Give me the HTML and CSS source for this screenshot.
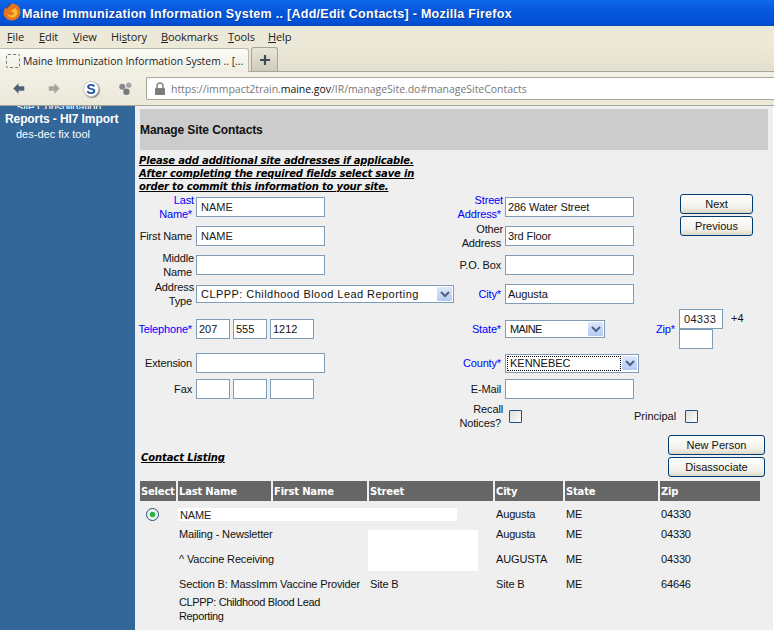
FILE: index.html
```html
<!DOCTYPE html>
<html lang="en">
<head>
<meta charset="utf-8">
<title>Maine Immunization Information System</title>
<link rel="stylesheet" href="styles.css">
</head>
<body>
<div class="window">
  <header class="titlebar">
    <svg class="ff-logo" viewBox="0 0 20 20" width="20" height="20" aria-hidden="true">
      <circle cx="10" cy="10" r="8.5" fill="#2c4f9c"/>
      <path d="M10 1.5c5 0 8.5 4 8.5 8.5s-3.8 8.5-8.5 8.5c-4.6 0-8-3.2-8.5-7.5C2 8 3 6 4.5 5c-.2 1 .1 1.8.6 2.2C5.800 5 7.500 4.500 8 3.500 8.800 2.500 9.400 2 10 1.500z" fill="#e8741e"/>
      <path d="M12 6c2.500.8 3.800 3 3.500 5.300-.4 2.600-2.800 4.400-5.500 4.200-2.300-.2-4-1.600-4.600-3.500 1.500 1.500 3.700 1.800 5.300 1 1.500-.8 1.400-2.300.3-3-1-.6-1.500-.3-2.200-.3.100-1 1-1.800 2-2 .7-.2 1.200-.9 1.200-1.700z" fill="#f6c32f"/>
    </svg>
    <span class="title-text">Maine Immunization Information System .. [Add/Edit Contacts] - Mozilla Firefox</span>
  </header>

  <nav class="menubar">
    <span class="menu-item"><u>F</u>ile</span>
    <span class="menu-item"><u>E</u>dit</span>
    <span class="menu-item"><u>V</u>iew</span>
    <span class="menu-item">Hi<u>s</u>tory</span>
    <span class="menu-item"><u>B</u>ookmarks</span>
    <span class="menu-item"><u>T</u>ools</span>
    <span class="menu-item"><u>H</u>elp</span>
  </nav>

  <div class="tabbar">
    <div class="tab">
      <span class="tab-favicon"></span>
      <span class="tab-label">Maine Immunization Information System .. [...</span>
    </div>
    <div class="tab-new">
      <svg viewBox="0 0 12 12" width="12" height="12" aria-hidden="true"><path d="M6 1v10M1 6h10" stroke="#3f4a55" stroke-width="2.200" fill="none"/></svg>
    </div>
  </div>

  <div class="navbar">
    <svg class="nav-icon nav-back" viewBox="0 0 16 14" width="14" height="13" aria-hidden="true"><path d="M7.500 1 1.500 7l6 6V9.500H14v-5H7.500z" fill="#4d6478"/></svg>
    <svg class="nav-icon nav-fwd" viewBox="0 0 16 14" width="14" height="13" aria-hidden="true"><path d="M8.500 1l6 6-6 6V9.500H2v-5h6.500z" fill="#a3a79d"/></svg>
    <span class="nav-s">S</span>
    <svg class="nav-icon nav-ext" viewBox="0 0 16 16" width="15" height="15" aria-hidden="true"><circle cx="4.500" cy="6" r="3.200" fill="#85888a"/><circle cx="11.500" cy="4.500" r="2.800" fill="#a2a5a5"/><circle cx="9" cy="11.500" r="3.400" fill="#787b7d"/></svg>
    <div class="urlbar">
      <svg class="lock" viewBox="0 0 12 13" width="12" height="13" aria-hidden="true"><path d="M3 6V4a3 3 0 0 1 6 0v2" fill="none" stroke="#8a8a8a" stroke-width="1.600"/><rect x="1" y="6" width="10" height="7" rx="1" fill="#7d7d7d"/></svg>
      <span class="url">https://immpact2train.<b>maine.gov</b>/IR/manageSite.do#manageSiteContacts</span>
    </div>
  </div>

  <div class="content">
    <aside class="sidebar">
      <div class="side-clipped">Site Consolidation</div>
      <div class="side-head">Reports - HI7 Import</div>
      <div class="side-link">des-dec fix tool</div>
    </aside>

    <main class="main">
      <h1 class="page-head">Manage Site Contacts</h1>
      <p class="notice">Please add additional site addresses if applicable.<br>After completing the required fields select save in<br>order to commit this information to your site.</p>

      <form class="form">
        <label class="lbl req c1 r1">Last<span class="ln">Name*</span></label>
        <input class="inp wide c2 r1" value="NAME">
        <label class="lbl c1 r2"><span class="ln">First Name</span></label>
        <input class="inp wide c2 r2" value="NAME">
        <label class="lbl c1 r3">Middle<span class="ln">Name</span></label>
        <input class="inp wide c2 r3">
        <label class="lbl c1 r4">Address<span class="ln">Type</span></label>
        <div class="sel sel-type c2w r4"><span class="sel-val">CLPPP: Childhood Blood Lead Reporting</span><span class="sel-btn"><svg viewBox="0 0 10 7" width="10" height="7"><path d="M1 1l4 4 4-4" fill="none" stroke="#4d6185" stroke-width="2"/></svg></span></div>
        <label class="lbl req c1 r5"><span class="ln">Telephone*</span></label>
        <div class="phone c2 r5"><input class="inp p3" value="207"><input class="inp p3" value="555"><input class="inp p4" value="1212"></div>
        <label class="lbl c1 r6"><span class="ln">Extension</span></label>
        <input class="inp wide c2 r6">
        <label class="lbl c1 r7"><span class="ln">Fax</span></label>
        <div class="phone c2 r7"><input class="inp p3"><input class="inp p3"><input class="inp p4"></div>

        <label class="lbl req c3 r1">Street<span class="ln">Address*</span></label>
        <input class="inp wide c4 r1" value="286 Water Street">
        <label class="lbl c3 r2">Other<span class="ln">Address</span></label>
        <input class="inp wide c4 r2" value="3rd Floor">
        <label class="lbl c3 r3"><span class="ln">P.O. Box</span></label>
        <input class="inp wide c4 r3">
        <label class="lbl req c3 r4"><span class="ln">City*</span></label>
        <input class="inp wide c4 r4" value="Augusta">
        <label class="lbl req c3 r5"><span class="ln">State*</span></label>
        <div class="sel sel-state c4 r5"><span class="sel-val">MAINE</span><span class="sel-btn"><svg viewBox="0 0 10 7" width="10" height="7"><path d="M1 1l4 4 4-4" fill="none" stroke="#4d6185" stroke-width="2"/></svg></span></div>
        <label class="lbl req c3 r6"><span class="ln">County*</span></label>
        <div class="sel sel-county c4w r6"><span class="sel-val focus">KENNEBEC</span><span class="sel-btn"><svg viewBox="0 0 10 7" width="10" height="7"><path d="M1 1l4 4 4-4" fill="none" stroke="#4d6185" stroke-width="2"/></svg></span></div>
        <label class="lbl c3 r7"><span class="ln">E-Mail</span></label>
        <input class="inp wide c4 r7">
        <label class="lbl c3 r8">Recall<span class="ln">Notices?</span></label>
        <span class="check recall c4 r8"></span>

        <div class="zip c5 r5">
          <label class="lbl lbl-zip req">Zip*</label>
          <div class="zip-inputs">
            <div class="zip-top"><input class="inp zip5" value="04333"><span class="plus4">+4</span></div>
            <input class="inp zip4">
          </div>
        </div>
        <div class="principal c5 r8"><label class="lbl-plain">Principal</label><span class="check"></span></div>

        <div class="btns btns-top"><button type="button" class="btn btn-s">Next</button><button type="button" class="btn btn-s">Previous</button></div>
        <h2 class="listing-head">Contact Listing</h2>
        <div class="btns btns-bottom"><button type="button" class="btn btn-l">New Person</button><button type="button" class="btn btn-l">Disassociate</button></div>
      </form>

      <table class="contacts">
        <colgroup><col class="k1"><col class="k2"><col class="k3"><col class="k4"><col class="k5"><col class="k6"><col class="k7"></colgroup>
        <thead><tr><th>Select</th><th>Last Name</th><th>First Name</th><th>Street</th><th>City</th><th>State</th><th>Zip</th></tr></thead>
        <tbody>
          <tr class="h1r"><td class="radio-cell"><span class="radio"></span></td><td colspan="3"><div class="strip">NAME</div></td><td>Augusta</td><td>ME</td><td>04330</td></tr>
          <tr class="h2r"><td></td><td colspan="2">Mailing - Newsletter</td><td rowspan="2" class="box-cell"><div class="box"></div></td><td>Augusta</td><td>ME</td><td>04330</td></tr>
          <tr class="h3r"><td></td><td colspan="2">^ Vaccine Receiving</td><td>AUGUSTA</td><td>ME</td><td>04330</td></tr>
          <tr class="h2r"><td></td><td colspan="2">Section B: MassImm Vaccine Provider</td><td>Site B</td><td>Site B</td><td>ME</td><td>64646</td></tr>
          <tr class="h3r"><td></td><td colspan="2" class="tight">CLPPP: Childhood Blood Lead<br>Reporting</td><td></td><td></td><td></td><td></td></tr>
        </tbody>
      </table>
    </main>
  </div>
</div>
</body>
</html>
```
FILE: styles.css
```css
* { box-sizing: border-box; }
html, body { margin: 0; padding: 0; height: 100%; overflow: hidden; background: #fff; }
body { font-family: "Liberation Sans", Arial, sans-serif; font-size: 11px; color: #111; }
.window { width: 774px; height: 630px; display: flex; flex-direction: column; overflow: hidden; }

/* window chrome */
.titlebar { height: 26px; flex: none; display: flex; align-items: center; padding-left: 2px;
  background: linear-gradient(#0a6cf0 0, #0f62e4 3px, #0455dc 12px, #0352d8 22px, #0347bc 26px); }
.ff-logo { flex: none; margin-top: -2px; }
.title-text { padding-top: 2px; font-family: "Liberation Sans", sans-serif; font-weight: 700; font-size: 12.500px; letter-spacing: .28px; color: #fff; white-space: nowrap; text-shadow: 1px 1px 0 #0a3a9a; }

.menubar { height: 21px; flex: none; display: flex; align-items: center; padding-left: 7px; background: #ece9d8; font-family: "Open Sans", sans-serif; font-size: 11px; letter-spacing: -.1px; color: #222; }
.menu-item:nth-child(1) { width: 32px; }
.menu-item:nth-child(2) { width: 34px; }
.menu-item:nth-child(3) { width: 38px; }
.menu-item:nth-child(4) { width: 50px; }
.menu-item:nth-child(5) { width: 67px; }
.menu-item:nth-child(6) { width: 40px; }

.tabbar { height: 25px; flex: none; display: flex; align-items: flex-end; gap: 2px; background: linear-gradient(#ece9d8, #e3e0cf); border-bottom: 1px solid #a7a498; }
.tab { width: 249px; height: 24px; margin-bottom: -1px; display: flex; align-items: center; padding-left: 6px; gap: 3px; background: linear-gradient(#fbfbf8, #f0eee2); border: 1px solid #bdbaad; border-bottom: 0; border-left: 0; border-radius: 0 3px 0 0; }
.tab-favicon { width: 14px; height: 14px; border: 1px dashed #777; border-radius: 2px; flex: none; }
.tab-label { font-family: "Open Sans", sans-serif; font-size: 10.400px; color: #222; white-space: nowrap; }
.tab-new { width: 27px; height: 24px; display: flex; align-items: center; justify-content: center; background: linear-gradient(#e9e6d8, #cfccbb); border: 1px solid #a7a498; border-bottom: 0; border-radius: 3px 3px 0 0; }

.navbar { height: 34px; flex: none; display: flex; align-items: center; background: linear-gradient(#f3f1e6, #ebe8d9); border-bottom: 1px solid #a7a498; position: relative; }
.nav-icon { flex: none; }
.nav-back { margin-left: 12px; }
.nav-fwd { margin-left: 21px; }
.nav-s { flex: none; margin-left: 22px; width: 16px; height: 16px; border-radius: 50%; background: #fff; border: 1px solid #c9c9c9; box-shadow: 1px 1px 1px #888; display: flex; align-items: center; justify-content: center; font-family: "Liberation Sans", sans-serif; font-weight: 700; font-size: 14px; color: #1d4f9e; }
.nav-ext { margin-left: 19px; }
.urlbar { flex: 1; height: 23px; margin-left: 13px; background: #fff; border: 1px solid #a9a698; border-right: 0; border-radius: 2px 0 0 2px; display: flex; align-items: center; padding-left: 7px; gap: 5px; }
.url { font-family: "Open Sans", sans-serif; font-size: 10.500px; letter-spacing: -.04px; color: #787878; white-space: nowrap; }
.url b { font-weight: 400; color: #111; }

/* page */
.content { flex: 1; min-height: 0; display: flex; }
.sidebar { width: 135px; flex: none; background: #336699; color: #fff; overflow: hidden; }
.side-clipped { height: 3px; padding-left: 16px; line-height: 3px; font-size: 11px; letter-spacing: -.2px; overflow: hidden; }
.side-head { margin: 3px 0 0 5px; font-weight: 700; font-size: 12px; letter-spacing: -.1px; line-height: 15px; }
.side-link { margin: 0 0 0 16px; font-size: 11px; line-height: 14px; }

.main { flex: 1; min-width: 0; margin-right: 1px; background: #efefef; padding: 3px 5px 0 5px; position: relative; }
.page-head { margin: 0; height: 41px; background: #cccccc; font-size: 12px; font-weight: 700; letter-spacing: -.1px; line-height: 43px; color: #111; padding-left: 0; }
.notice { margin: 4px 0 0 -1px; font-family: "DejaVu Sans", sans-serif; font-style: italic; font-weight: 700; font-size: 10px; letter-spacing: -.18px; line-height: 13px; text-decoration: underline; color: #000; white-space: nowrap; }

.form { display: grid; margin-top: 1px;
  grid-template-columns: 56px 259px 50px 163px 97px;
  grid-template-rows: 26px 32px 26px 32px 38px 30px 22px 32px 47px; }
.c1 { grid-column: 1; } .c2 { grid-column: 2; } .c2w { grid-column: 2; }
.c3 { grid-column: 3; } .c4 { grid-column: 4; } .c4w { grid-column: 4; }
.c5 { grid-column: 4 / 6; }
.r1 { grid-row: 1; } .r2 { grid-row: 2; } .r3 { grid-row: 3; } .r4 { grid-row: 4; }
.r5 { grid-row: 5; } .r6 { grid-row: 6; } .r7 { grid-row: 7; } .r8 { grid-row: 8; }

.lbl { align-self: center; justify-self: end; text-align: right; line-height: 14px; letter-spacing: -.15px; padding-right: 2px; color: #111; white-space: nowrap; }
.lbl .ln { display: block; padding-right: 2px; }
.req { color: #0000ff; }
.inp { align-self: center; height: 20px; border: 1px solid #7f9db9; background: #fff; padding: 0 4px; font: 11px "Liberation Sans", Arial, sans-serif; color: #222; outline: 0; }
.wide { width: 129px; }
.phone { align-self: center; display: flex; gap: 3px; }
.p3 { width: 34px; padding: 0 2px; color: #111; }
.p4 { width: 44px; padding: 0 2px; color: #111; }
.c4.inp { padding: 0 2px; color: #111; letter-spacing: -.1px; }

.sel { align-self: center; height: 18px; display: flex; align-items: center; justify-content: space-between; border: 1px solid #7f9db9; background: #fff; padding: 1px; font-size: 11px; }
.sel-type { width: 258px; letter-spacing: .45px; }
.sel-state { width: 100px; letter-spacing: -.6px; }
.sel-county { width: 134px; height: 19px; }
.sel-val { flex: 1; padding-left: 3px; white-space: nowrap; line-height: 14px; color: #111; }
.sel-val.focus { outline: 1px dotted #000; outline-offset: -1px; padding-left: 3px; height: 100%; margin-right: 0; }
.sel-btn { flex: none; width: 15px; height: 14px; background: linear-gradient(#dfe8fb, #b4c9f2); border-radius: 1px; display: flex; align-items: center; justify-content: center; margin-left: 1px; }

.zip { align-self: center; display: flex; align-items: center; width: 131px; }
.c5.zip { justify-self: start; margin-left: 151px; }
.lbl-zip { width: 23px; padding: 0; text-align: left; flex: none; }
.zip-inputs { display: flex; flex-direction: column; align-items: flex-start; }
.zip-top { display: flex; align-items: center; }
.zip5 { width: 44px; padding: 0 4px; letter-spacing: .3px; }
.zip4 { width: 34px; align-self: flex-start; }
.plus4 { margin-left: 8px; color: #111; margin-top: -2px; }
.check { align-self: center; width: 13px; height: 13px; border: 1px solid #1c5180; border-radius: 1px; background: linear-gradient(135deg, #dcdcd7, #fff); display: block; }
.recall { margin-left: 4px; }
.principal { align-self: center; display: flex; align-items: center; gap: 9px; margin-left: 129px; }
.lbl-plain { color: #111; }

.btns { grid-column: 5; display: flex; flex-direction: column; align-items: center; gap: 2px; align-self: start; }
.btns-top { grid-row: 1 / 3; }
.btns-bottom { grid-row: 8 / 10; margin-top: 35px; }
.btn { height: 20px; border: 1px solid #003c74; border-radius: 3px; background: linear-gradient(#fff, #f2f1e9 70%, #dcd8c8); font: 11px "Liberation Sans", Arial, sans-serif; color: #111; padding: 0; }
.btn-s { width: 73px; }
.btn-l { width: 97px; }
.listing-head { grid-column: 1 / 4; grid-row: 9; margin: 0 0 0 1px; align-self: start; padding-top: 19px; font-family: "DejaVu Sans", sans-serif; font-style: italic; font-weight: 700; font-size: 10px; letter-spacing: -.1px; line-height: 13px; text-decoration: underline; color: #000; }

/* listing */
.contacts { table-layout: fixed; width: 621px; border-collapse: separate; border-spacing: 2px; margin: 0 0 0 -2px; }
.k1 { width: 36px; } .k2 { width: 93px; } .k3 { width: 94px; } .k4 { width: 124px; }
.k5 { width: 68px; } .k6 { width: 93px; } .k7 { width: 100px; }
.contacts th { height: 20px; padding: 0 0 0 1px; background: #666; color: #fff; text-align: left; font-family: "DejaVu Sans", sans-serif; font-weight: 700; font-size: 10px; letter-spacing: -.2px; white-space: nowrap; overflow: hidden; }
.contacts td { padding: 0 0 0 1px; vertical-align: middle; line-height: 14px; color: #111; white-space: nowrap; letter-spacing: -.15px; }
.h1r td { height: 20px; padding-top: 2px; }
.h2r td { height: 18px; }
.h3r td { height: 28px; }
.contacts td.tight { letter-spacing: -.35px; }
.contacts td.radio-cell { padding-left: 6px; }
.radio { display: block; width: 13px; height: 13px; border-radius: 50%; border: 1px solid #1c5180; background: radial-gradient(circle, #25b13c 0 2.500px, #e8efe8 3px, #fff 100%); }
.strip { width: 279px; height: 13px; margin-left: -1px; padding-left: 2px; background: #fff; line-height: 14px; color: #222; }
.contacts td.box-cell { padding: 0; vertical-align: top; position: relative; }
.box { position: absolute; left: -1px; top: 5px; width: 110px; height: 41px; background: #fff; }
```
